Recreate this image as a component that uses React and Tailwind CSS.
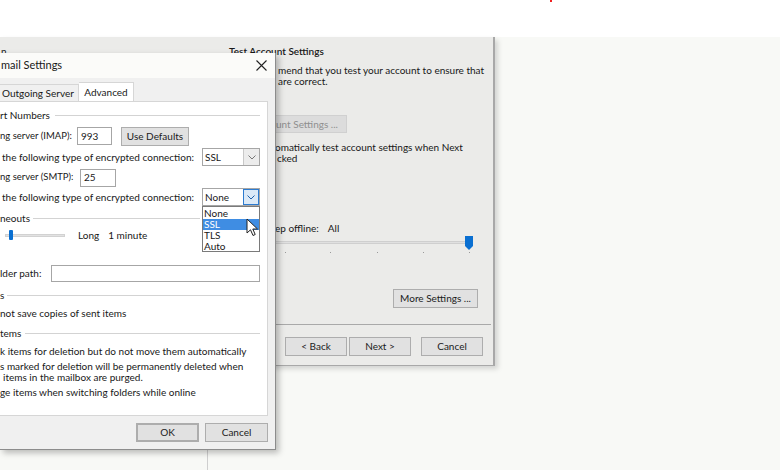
import { useState } from 'react';

function GroupLabel({ label, gap }) {
  return (
    <div className="flex items-center h-[12px]">
      <span className="whitespace-nowrap">{label}</span>
      <div className="flex-1 h-px bg-[#d3d3d3]" style={{ marginLeft: gap }} />
    </div>
  );
}

function WinButton({ children, className = '' }) {
  return (
    <div
      className={`flex items-center justify-center h-[19px] border border-[#adadad] bg-[#e1e1e1] text-[#1b1b1b] ${className}`}
    >
      {children}
    </div>
  );
}

function Chevron({ color = '#555' }) {
  return (
    <svg width="8" height="5" viewBox="0 0 8 5">
      <path d="M0.5 0.5 L4 4 L7.5 0.5" fill="none" stroke={color} strokeWidth="1" />
    </svg>
  );
}

function Select({ value, focused }) {
  return (
    <div className="flex w-[58px] h-[18px] border border-[#a6a6a6] bg-white">
      <div className="flex-1 flex items-center pl-[2px]">{value}</div>
      <div
        className={`w-[16px] flex items-center justify-center ${
          focused ? 'border border-[#2d7bd0] bg-[#dbe9f7]' : 'border-l border-[#c8c8c8] bg-[#ececec]'
        }`}
      >
        <Chevron color={focused ? '#1f5fa8' : '#777'} />
      </div>
    </div>
  );
}

function Cursor() {
  return (
    <svg width="13" height="20" viewBox="0 0 13 20" className="absolute left-[43px] top-[11px]">
      <path
        d="M1 1 L1 15 L4.5 11.8 L7 17.5 L9.2 16.5 L6.8 11 L11.5 11 Z"
        fill="#fff"
        stroke="#222"
        strokeWidth="1"
        strokeLinejoin="round"
      />
    </svg>
  );
}

function EmailSettingsDialog() {
  const [tab] = useState('advanced');
  return (
    <div className="absolute left-0 top-[53px] w-[276px] h-[397px] flex flex-col bg-[#f0f0f0] border-r border-b border-[#8c8c8c] shadow-[3px_3px_6px_rgba(0,0,0,0.25)]">
      {/* title bar */}
      <div className="h-[25px] flex items-center justify-between bg-[#fbfbf9] pr-[8px] text-[11px]">
        <span className="pl-[1px]">mail Settings</span>
        <svg width="11" height="11" viewBox="0 0 11 11">
          <path d="M0.5 0.5 L10.5 10.5 M10.5 0.5 L0.5 10.5" stroke="#222" strokeWidth="1.1" />
        </svg>
      </div>

      {/* tabs */}
      <div className="flex items-end h-[23px]">
        <div className="h-[17px] w-[79px] flex items-center pl-[2px] border-t border-r border-[#d6d6d6] bg-[#f0f0f0]">
          Outgoing Server
        </div>
        <div
          className={`h-[19px] w-[55px] flex items-center justify-center border-t border-r border-[#d6d6d6] ${
            tab === 'advanced' ? 'bg-white' : ''
          }`}
        >
          Advanced
        </div>
      </div>

      {/* panel */}
      <div className="relative w-[268px] h-[315px] bg-white border-t border-r border-b border-[#d6d6d6] pr-[7px] flex flex-col">
        <div className="mt-[7px]">
          <GroupLabel label="rt Numbers" gap="5px" />
        </div>

        <div className="mt-[6px] flex items-center h-[18px]">
          <span className="w-[77px] text-[9.5px]">ng server (IMAP):</span>
          <div className="w-[35px] h-[18px] border border-[#a6a6a6] flex items-center pl-[3px]">993</div>
          <WinButton className="ml-[9px] w-[68px] h-[19px]">Use Defaults</WinButton>
        </div>

        <div className="mt-[3px] flex items-center justify-between h-[18px]">
          <span className="pl-[2px]">the following type of encrypted connection:</span>
          <Select value="SSL" />
        </div>

        <div className="mt-[3px] flex items-center h-[17px]">
          <span className="w-[80px] text-[9.5px]">ng server (SMTP):</span>
          <div className="w-[36px] h-[18px] border border-[#a6a6a6] flex items-center pl-[3px]">25</div>
        </div>

        <div className="mt-[2px] flex items-center justify-between h-[18px]">
          <span className="pl-[2px]">the following type of encrypted connection:</span>
          <Select value="None" focused />
        </div>

        <div className="mt-[6px] pr-[60px]">
          <GroupLabel label="neouts" gap="3px" />
        </div>

        <div className="mt-[5px] flex items-center h-[12px]">
          <div className="relative ml-[5px] w-[60px] h-[3px] bg-[#e2e2e2] border border-[#d2d2d2]">
            <div className="absolute left-[3px] top-[-5px] w-[4px] h-[10px] rounded-[1px] bg-[#0a6fd1]" />
          </div>
          <span className="ml-[13px]">Long</span>
          <span className="ml-[9px]">1 minute</span>
        </div>

        <div className="mt-[24px] flex items-center h-[17px]">
          <span className="w-[51px]">lder path:</span>
          <div className="flex-1 h-[17px] border border-[#a6a6a6]" />
        </div>

        <div className="mt-[7px]">
          <GroupLabel label="s" gap="3px" />
        </div>

        <div className="mt-[6px] h-[12px] flex items-center">not save copies of sent items</div>

        <div className="mt-[8px]">
          <GroupLabel label="tems" gap="4px" />
        </div>

        <div className="mt-[6px] h-[12px] flex items-center">
          k items for deletion but do not move them automatically
        </div>

        <div className="mt-[4px] leading-[11px]">
          <div>s marked for deletion will be permanently deleted when</div>
          <div className="pl-[3px]">items in the mailbox are purged.</div>
        </div>

        <div className="mt-[3px] h-[12px] flex items-center">
          ge items when switching folders while online
        </div>

        {/* open dropdown list */}
        <div className="absolute left-[202px] top-[104px] w-[58px] h-[46px] bg-white border border-[#7a7a7a] leading-[11px] pt-px">
          <div className="pl-[1px]">None</div>
          <div className="pl-[1px] bg-[#3f8de3] text-white">SSL</div>
          <div className="pl-[1px]">TLS</div>
          <div className="pl-[1px]">Auto</div>
          <Cursor />
        </div>
      </div>

      {/* buttons */}
      <div className="mt-[7px] flex justify-end gap-[6px] pr-[7px]">
        <WinButton className="w-[63px] border-2 border-[#2f79c2]">OK</WinButton>
        <WinButton className="w-[63px]">Cancel</WinButton>
      </div>
    </div>
  );
}

function AddAccountWindow() {
  const ticks = [10, 55, 102, 148, 194];
  return (
    <div className="absolute left-0 top-[37px] w-[495px] h-[329px] flex flex-col bg-[#ebebe9] border-r-2 border-b border-[#a8a8a8] shadow-[3px_3px_5px_rgba(0,0,0,0.15)]">
      <div className="mt-[8px] flex items-center h-[12px]">
        <span className="w-[229px] pl-[1px]">n</span>
        <span className="font-semibold">Test Account Settings</span>
      </div>

      <div className="ml-[275px] flex flex-col">
        <div className="mt-[8px] pl-[3px] leading-[11px]">
          <div>mend that you test your account to ensure that</div>
          <div>are correct.</div>
        </div>

        <div className="mt-[28px] w-[72px] h-[18px] bg-[#dcdcdc] border border-[#d0d0d0] text-[#8f8f8f] flex items-center overflow-hidden">
          unt Settings ...
        </div>

        <div className="mt-[9px] leading-[11px]">
          <div>omatically test account settings when Next</div>
          <div className="pl-[2px]">cked</div>
        </div>

        <div className="mt-[58px] h-[12px] flex items-center">
          <span>ep offline:</span>
          <span className="ml-[9px]">All</span>
        </div>

        <div className="mt-[2px] relative h-[14px] w-[200px]">
          <div className="absolute left-0 top-[5px] w-[196px] h-[3px] bg-[#e0e0e0] border border-[#cfcfcf]" />
          <svg width="8" height="14" viewBox="0 0 8 14" className="absolute left-[190px] top-0">
            <path d="M0 0 H8 V10 L4 14 L0 10 Z" fill="#0a6fd1" />
          </svg>
        </div>

        <div className="mt-[2px] relative h-[1px] w-[200px]">
          {ticks.map((x) => (
            <div key={x} className="absolute top-0 w-px h-px bg-[#9a9a9a]" style={{ left: x }} />
          ))}
        </div>

        <div className="mt-[36px] flex">
          <WinButton className="ml-[118px] w-[85px] h-[19px]">More Settings ...</WinButton>
        </div>

        <div className="mt-[16px] w-[216px] h-px bg-[#a9a9a9]" />

        <div className="mt-[12px] flex">
          <WinButton className="ml-[10px] w-[62px]">&lt; Back</WinButton>
          <WinButton className="ml-[2px] w-[62px]">Next &gt;</WinButton>
          <WinButton className="ml-[10px] w-[62px]">Cancel</WinButton>
        </div>
      </div>
    </div>
  );
}

export default function App() {
  return (
    <div className="relative w-[780px] h-[470px] overflow-hidden whitespace-nowrap bg-[#f8f9f6] text-[10px] text-[#181818] font-['Lato',sans-serif]">
      <div className="h-[37px] bg-white relative">
        <div className="absolute left-[550px] top-0 w-[2px] h-[2px] bg-[#f02020]" />
      </div>
      <div className="absolute left-[207px] top-[449px] w-px h-[21px] bg-[#cfcfcf]" />
      <AddAccountWindow />
      <EmailSettingsDialog />
    </div>
  );
}
